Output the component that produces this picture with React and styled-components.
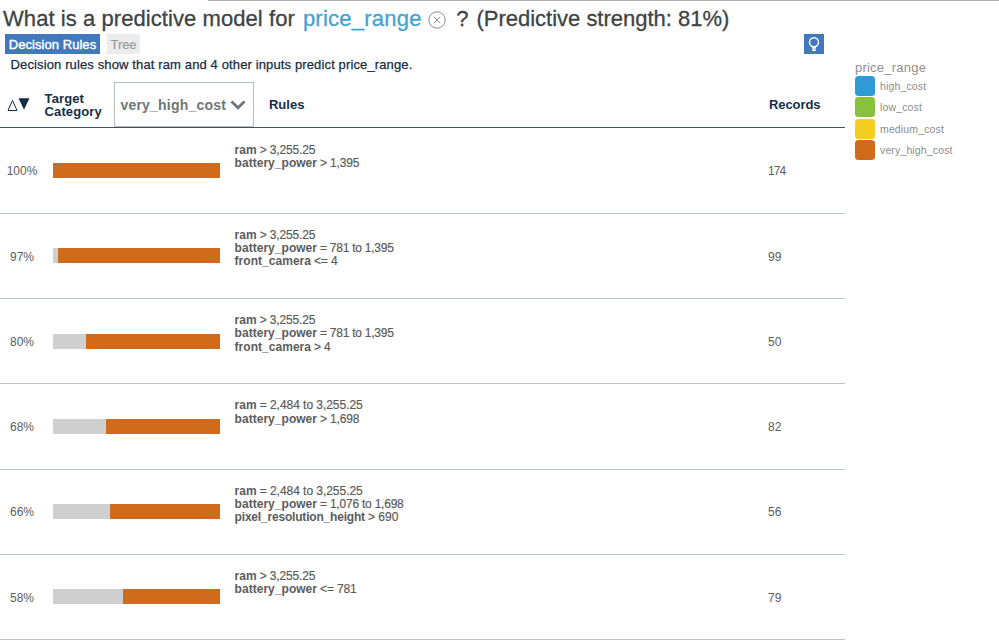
import React from "react";
import styled, { createGlobalStyle } from "styled-components";

const GlobalStyle = createGlobalStyle`
  * { box-sizing: border-box; }
  body {
    margin: 0;
    background: #fff;
    overflow: hidden;
    font-family: "Liberation Sans", Arial, sans-serif;
  }
`;

const Page = styled.div`
  width: 999px;
  height: 643px;
  overflow: hidden;
  background: #fff;
`;

const TopRule = styled.div`
  height: 1px;
  margin-left: 208px;
  background: #a4b0af;
`;

const Title = styled.header`
  display: flex;
  align-items: center;
  height: 35px;
  padding-left: 3px;
  font-size: 22px;
  line-height: 35px;
  white-space: pre;
  color: #3e4443;
`;

const TitleText = styled.span`
  letter-spacing: ${(p) => p.$spacing || 0}px;
  margin-left: ${(p) => p.$gap || 0}px;
  -webkit-text-stroke: 0.3px currentColor;
`;

const Field = styled(TitleText)`
  color: #42a3d3;
`;

const CloseIcon = styled.svg`
  width: 18px;
  height: 18px;
  margin: 3px 0 0 6.5px;
  fill: none;
  stroke: #8c8c8c;
`;

const Body = styled.div`
  display: flex;
`;

const Main = styled.main`
  width: 845px;
  flex: none;
`;

const Toolbar = styled.div`
  display: flex;
  justify-content: space-between;
  height: 20px;
  margin-top: -2px;
  padding: 0 21px 0 5px;
`;

const Tabs = styled.div`
  display: flex;
  gap: 7px;
`;

const Tab = styled.button`
  width: ${(p) => p.$width}px;
  height: 20px;
  padding: 1px 0 0;
  border: 0;
  font: 13px/19px "Liberation Sans", Arial, sans-serif;
  letter-spacing: ${(p) => (p.$active ? 0.05 : -0.1)}px;
  text-align: center;
  white-space: nowrap;
  color: ${(p) => (p.$active ? "#fff" : "#959d9c")};
  background: ${(p) => (p.$active ? "#4178be" : "#ececec")};
  -webkit-text-stroke: ${(p) => (p.$active ? 0.4 : 0.2)}px currentColor;
`;

const InsightButton = styled.button`
  display: block;
  width: 20px;
  height: 20px;
  padding: 0;
  border: 0;
  background: #4178be;

  svg { display: block; }
`;

const Summary = styled.p`
  height: 28px;
  margin: 0;
  padding: 3px 0 0 10.5px;
  font-size: 13px;
  line-height: 15px;
  letter-spacing: 0.13px;
  color: #152e45;
  -webkit-text-stroke: 0.25px currentColor;
`;

const TableHead = styled.div`
  display: grid;
  grid-template-columns: 44.6px 69.4px 155px 500px 1fr;
  align-items: center;
  height: 46px;
  border-bottom: 1px solid #3e5266;
  color: #152e45;
  font-size: 13px;
  font-weight: bold;
  line-height: 13px;
`;

const SortIcon = styled.svg`
  width: 24px;
  height: 16px;
  margin-left: 7px;
`;

const HeadCell = styled.span`
  letter-spacing: ${(p) => p.$spacing || 0}px;
`;

const CategorySelect = styled.div`
  display: flex;
  align-items: center;
  width: 140px;
  height: 45px;
  padding: 1px 0 0 5.5px;
  border: 1px solid #b4bfbd;
  color: #6d7777;
  font-size: 14px;
  letter-spacing: 0.2px;

  svg { margin-left: 4px; }
`;

const Rows = styled.div`
  padding-top: 0.5px;
`;

const Row = styled.div`
  display: grid;
  grid-template-columns: 53px 181.6px 533.4px 1fr;
  height: 85.25px;
  border-bottom: 1px solid #bcc5c4;
  color: #5c5c5c;
  font-size: 12px;
`;

const Percent = styled.div`
  width: 44px;
  padding-top: 34.8px;
  line-height: 16px;
  text-align: center;
`;

const Bar = styled.div`
  display: flex;
  width: 167px;
  height: 15px;
  margin-top: 34.6px;
  background: #cfcfcf;
`;

const BarFill = styled.div`
  margin-left: auto;
  background: #cf6b1a;
`;

const Rules = styled.div`
  padding-top: 15px;
  line-height: 13.3px;
`;

const Rule = styled.div`
  display: flex;
  gap: 3px;
  white-space: pre;
`;

const RuleField = styled.span`
  font-weight: bold;
  letter-spacing: ${(p) => p.$spacing || 0.03}px;
`;

const RuleValue = styled.span`
  letter-spacing: ${(p) => p.$spacing ?? -0.14}px;
  -webkit-text-stroke: 0.2px currentColor;
`;

const Records = styled.div`
  padding-top: 34.8px;
  line-height: 16px;
  letter-spacing: ${(p) => p.$spacing ?? 0}px;
`;

const Legend = styled.aside`
  padding: 22px 0 0 10px;
`;

const LegendTitle = styled.div`
  height: 18px;
  overflow: hidden;
  font-size: 13px;
  line-height: 20px;
  letter-spacing: 0.22px;
  color: #8f8f8f;
`;

const LegendItem = styled.div`
  display: flex;
  align-items: flex-start;
  height: 21.45px;
`;

const Swatch = styled.span`
  width: 20px;
  height: 20px;
  margin-right: 5px;
  border-radius: 3.5px;
  background: ${(p) => p.$color};
`;

const LegendLabel = styled.span`
  height: 16px;
  overflow: hidden;
  padding-top: 4px;
  font-size: 10.5px;
  line-height: 12px;
  letter-spacing: 0.14px;
  color: #8c8c8c;
`;

const rows = [
  { pct: 100, records: 174, rules: [["ram", "> 3,255.25"], ["battery_power", "> 1,395"]] },
  { pct: 97, records: 99, rules: [["ram", "> 3,255.25"], ["battery_power", "= 781 to 1,395", 0, -0.25], ["front_camera", "<= 4"]] },
  { pct: 80, records: 50, rules: [["ram", "> 3,255.25"], ["battery_power", "= 781 to 1,395", 0, -0.25], ["front_camera", "> 4"]] },
  { pct: 68, records: 82, rules: [["ram", "= 2,484 to 3,255.25", 0, -0.04], ["battery_power", "> 1,698"]] },
  { pct: 66, records: 56, rules: [["ram", "= 2,484 to 3,255.25", 0, -0.04], ["battery_power", "= 1,076 to 1,698", 0, -0.22], ["pixel_resolution_height", "> 690", -0.19, 0.05]] },
  { pct: 58, records: 79, rules: [["ram", "> 3,255.25"], ["battery_power", "<= 781"]] },
];

const legend = [
  ["high_cost", "#2f9ad6"],
  ["low_cost", "#86c23b"],
  ["medium_cost", "#f4ce20"],
  ["very_high_cost", "#cf6b1a"],
];

export default function App() {
  return (
    <Page>
      <GlobalStyle />
      <TopRule />
      <Title>
        <TitleText $spacing={0.07}>What is a predictive model for</TitleText>
        <Field $gap={8} $spacing={0.24}>price_range</Field>
        <CloseIcon viewBox="0 0 18 18">
          <circle cx="9" cy="9" r="8.2" />
          <path d="M5.8 5.8 12.2 12.2M12.2 5.8 5.8 12.2" />
        </CloseIcon>
        <TitleText $gap={10}>?</TitleText>
        <TitleText $gap={8} $spacing={-0.01}>(Predictive strength: 81%)</TitleText>
      </Title>
      <Body>
        <Main>
          <Toolbar>
            <Tabs>
              <Tab $active $width={95}>Decision Rules</Tab>
              <Tab $width={33}>Tree</Tab>
            </Tabs>
            <InsightButton aria-label="Insight">
              <svg width="20" height="20" viewBox="0 0 20 20">
                <circle cx="10" cy="8.3" r="4.5" fill="none" stroke="#fff" strokeWidth="1.5" />
                <path d="M8 13h4v1.8H8zM8.3 15.2h3.4V16.9H8.3z" fill="#fff" />
              </svg>
            </InsightButton>
          </Toolbar>
          <Summary>Decision rules show that ram and 4 other inputs predict price_range.</Summary>
          <TableHead>
            <SortIcon viewBox="0 0 24 16">
              <path d="M1 13.5 5.5 3.5 10 13.5Z" fill="none" stroke="#152e45" strokeWidth="1" />
              <path d="M11.5 1.2H22.5L17 12.8Z" fill="#152e45" />
            </SortIcon>
            <HeadCell $spacing={0.1}>Target<br />Category</HeadCell>
            <CategorySelect>
              very_high_cost
              <svg width="16" height="10" viewBox="0 0 16 10" fill="none" stroke="#6d7777" strokeWidth="2.8">
                <path d="M1.5 1.5 8 7.7 14.5 1.5" />
              </svg>
            </CategorySelect>
            <HeadCell>Rules</HeadCell>
            <HeadCell $spacing={-0.08}>Records</HeadCell>
          </TableHead>
          <Rows>
            {rows.map((row) => (
              <Row key={row.pct}>
                <Percent>{row.pct}%</Percent>
                <Bar>
                  <BarFill style={{ width: `${row.pct}%` }} />
                </Bar>
                <Rules>
                  {row.rules.map(([field, value, fieldSpacing, valueSpacing]) => (
                    <Rule key={field}>
                      <RuleField $spacing={fieldSpacing}>{field}</RuleField>
                      <RuleValue $spacing={valueSpacing}>{value}</RuleValue>
                    </Rule>
                  ))}
                </Rules>
                <Records $spacing={row.records > 99 ? -0.9 : 0}>{row.records}</Records>
              </Row>
            ))}
          </Rows>
        </Main>
        <Legend>
          <LegendTitle>price_range</LegendTitle>
          {legend.map(([label, color]) => (
            <LegendItem key={label}>
              <Swatch $color={color} />
              <LegendLabel>{label}</LegendLabel>
            </LegendItem>
          ))}
        </Legend>
      </Body>
    </Page>
  );
}
